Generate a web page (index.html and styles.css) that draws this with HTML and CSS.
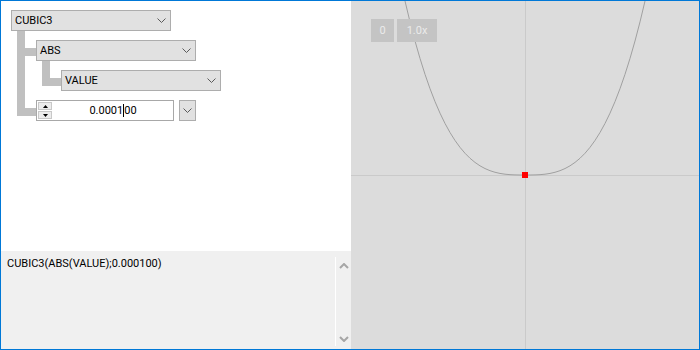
FILE: index.html
```html
<!DOCTYPE html>
<html lang="en">
<head>
    <meta charset="UTF-8">
    <title>Function Editor</title>
    <link rel="stylesheet" href="styles.css">
</head>
<body>
    <div class="window">
        <div class="editor">
            <div class="tree">
                <div class="node">
                    <div class="combo">
                        <span>CUBIC3</span>
                        <svg class="chev" width="9" height="5" viewBox="0 0 9 5"><polyline points="0.5,0.5 4.5,4.5 8.5,0.5" /></svg>
                    </div>
                    <div class="children">
                        <div class="node">
                            <div class="combo">
                                <span>ABS</span>
                                <svg class="chev" width="9" height="5" viewBox="0 0 9 5"><polyline points="0.5,0.5 4.5,4.5 8.5,0.5" /></svg>
                            </div>
                            <div class="children">
                                <div class="node">
                                    <div class="combo">
                                        <span>VALUE</span>
                                        <svg class="chev" width="9" height="5" viewBox="0 0 9 5"><polyline points="0.5,0.5 4.5,4.5 8.5,0.5" /></svg>
                                    </div>
                                </div>
                            </div>
                        </div>
                        <div class="node">
                            <div class="number-row">
                                <div class="numbox">
                                    <div class="spinner">
                                        <div class="spin-btn"><svg width="5" height="3" viewBox="0 0 5 3"><polygon points="2.5,0 5,3 0,3" /></svg></div>
                                        <div class="spin-btn"><svg width="5" height="3" viewBox="0 0 5 3"><polygon points="0,0 5,0 2.5,3" /></svg></div>
                                    </div>
                                    <span class="num-value">0.0001<i class="caret"></i>00</span>
                                </div>
                                <div class="drop-btn">
                                    <svg class="chev" width="9" height="5" viewBox="0 0 9 5"><polyline points="0.5,0.5 4.5,4.5 8.5,0.5" /></svg>
                                </div>
                            </div>
                        </div>
                    </div>
                </div>
            </div>
            <div class="formula">
                <div class="formula-text">CUBIC3(ABS(VALUE);0.000100)</div>
                <div class="scroll-sep"></div>
                <div class="scrollbar">
                    <svg width="10" height="6" viewBox="0 0 10 6"><polyline points="1,5 5,1 9,5" /></svg>
                    <svg width="10" height="6" viewBox="0 0 10 6"><polyline points="1,1 5,5 9,1" /></svg>
                </div>
            </div>
        </div>
        <div class="plot">
            <svg class="graph" width="348" height="348" viewBox="0 0 348 348">
                <line class="axis" x1="174.5" y1="0" x2="174.5" y2="348" />
                <line class="axis" x1="0" y1="174.5" x2="348" y2="174.5" />
                <polyline class="curve" points="49,-22.7 54,0 59,20.87 64,39.97 69,57.43 74,73.31 79,87.67 84,100.59 89,112.16 94,122.44 99,131.52 104,139.46 109,146.35 114,152.25 119,157.25 124,161.41 129,164.82 134,167.56 139,169.68 144,171.28 149,172.43 154,173.19 159,173.66 164,173.9 169,174 174,174 179,174 184,173.9 189,173.66 194,173.19 199,172.43 204,171.28 209,169.68 214,167.56 219,164.82 224,161.41 229,157.25 234,152.25 239,146.35 244,139.46 249,131.52 254,122.44 259,112.16 264,100.59 269,87.67 274,73.31 279,57.43 284,39.97 289,20.87 294,0 299,-22.7" />
                <rect class="marker" x="171" y="171" width="6" height="6" />
            </svg>
            <div class="plot-buttons">
                <span class="plot-btn zero">0</span>
                <span class="plot-btn zoom">1.0x</span>
            </div>
        </div>
    </div>
</body>
</html>
```

FILE: styles.css
```css
* {
    margin: 0;
    padding: 0;
    box-sizing: border-box;
}

body {
    font-family: Roboto, 'Liberation Sans', sans-serif;
    font-size: 11px;
    color: #000;
    background: #fff;
}

.window {
    width: 700px;
    height: 350px;
    border: 1px solid #0078d7;
    display: grid;
    grid-template-columns: 350px 348px;
}

.editor {
    display: grid;
    grid-template-rows: 250px 98px;
    background: #fff;
}

.tree {
    padding: 9px 0 0 10px;
}

.node {
    position: relative;
}

.combo {
    width: 160px;
    height: 21px;
    border: 1px solid #adadad;
    background: #e1e1e1;
    padding: 0 4px 0 3px;
    display: flex;
    align-items: center;
    justify-content: space-between;
}

.chev polyline {
    fill: none;
    stroke: #5a5a5a;
    stroke-width: 1;
}

.children {
    position: relative;
    margin-left: 6px;
    padding: 9px 0 0 19px;
    display: flex;
    flex-direction: column;
    gap: 9px;
}

.children::before {
    content: "";
    position: absolute;
    left: 0;
    top: 0;
    bottom: 5px;
    width: 8px;
    background: #c0c0c0;
}

.children > .node::before {
    content: "";
    position: absolute;
    left: -19px;
    top: 8px;
    width: 19px;
    height: 8px;
    background: #c0c0c0;
}

.number-row {
    display: flex;
    gap: 5px;
    height: 21px;
}

.numbox {
    width: 138px;
    border: 1px solid #a8a8a8;
    background: #fff;
    display: flex;
    align-items: center;
    padding-left: 1px;
}

.spinner {
    width: 14px;
    display: flex;
    flex-direction: column;
    gap: 1px;
}

.spin-btn {
    height: 8px;
    background: #ececec;
    border: 1px solid #c8c8c8;
    display: flex;
    align-items: center;
    justify-content: center;
}

.spin-btn polygon {
    fill: #000;
}

.num-value {
    flex: 1;
    text-align: center;
    padding-left: 1px;
}

.caret {
    display: inline-block;
    width: 1px;
    height: 13px;
    background: #000;
    vertical-align: -3px;
}

.drop-btn {
    width: 17px;
    border: 1px solid #adadad;
    background: #e1e1e1;
    display: flex;
    align-items: center;
    justify-content: center;
}

.formula {
    background: #f0f0f0;
    display: flex;
}

.formula-text {
    width: 334px;
    padding: 6px 0 0 6px;
    line-height: 13px;
}

.scroll-sep {
    width: 1px;
    background: #fff;
    margin: 6px 0 3px;
}

.scrollbar {
    width: 15px;
    display: flex;
    flex-direction: column;
    justify-content: space-between;
    align-items: center;
    padding: 12px 0 7px;
}

.scrollbar polyline {
    fill: none;
    stroke: #a6a6a6;
    stroke-width: 2;
}

.plot {
    position: relative;
    background: #dcdcdc;
    overflow: hidden;
}

.graph {
    position: absolute;
    left: 0;
    top: 0;
}

.axis {
    stroke: #cacaca;
    stroke-width: 1;
}

.curve {
    fill: none;
    stroke: #a0a0a0;
    stroke-width: 1;
}

.marker {
    fill: #ff0000;
}

.plot-buttons {
    position: absolute;
    left: 20px;
    top: 18px;
    display: flex;
    gap: 3px;
}

.plot-btn {
    height: 23px;
    background: #c4c4c4;
    color: #ebebeb;
    display: flex;
    align-items: center;
    justify-content: center;
}

.plot-btn.zero {
    width: 23px;
}

.plot-btn.zoom {
    width: 40px;
}
```
